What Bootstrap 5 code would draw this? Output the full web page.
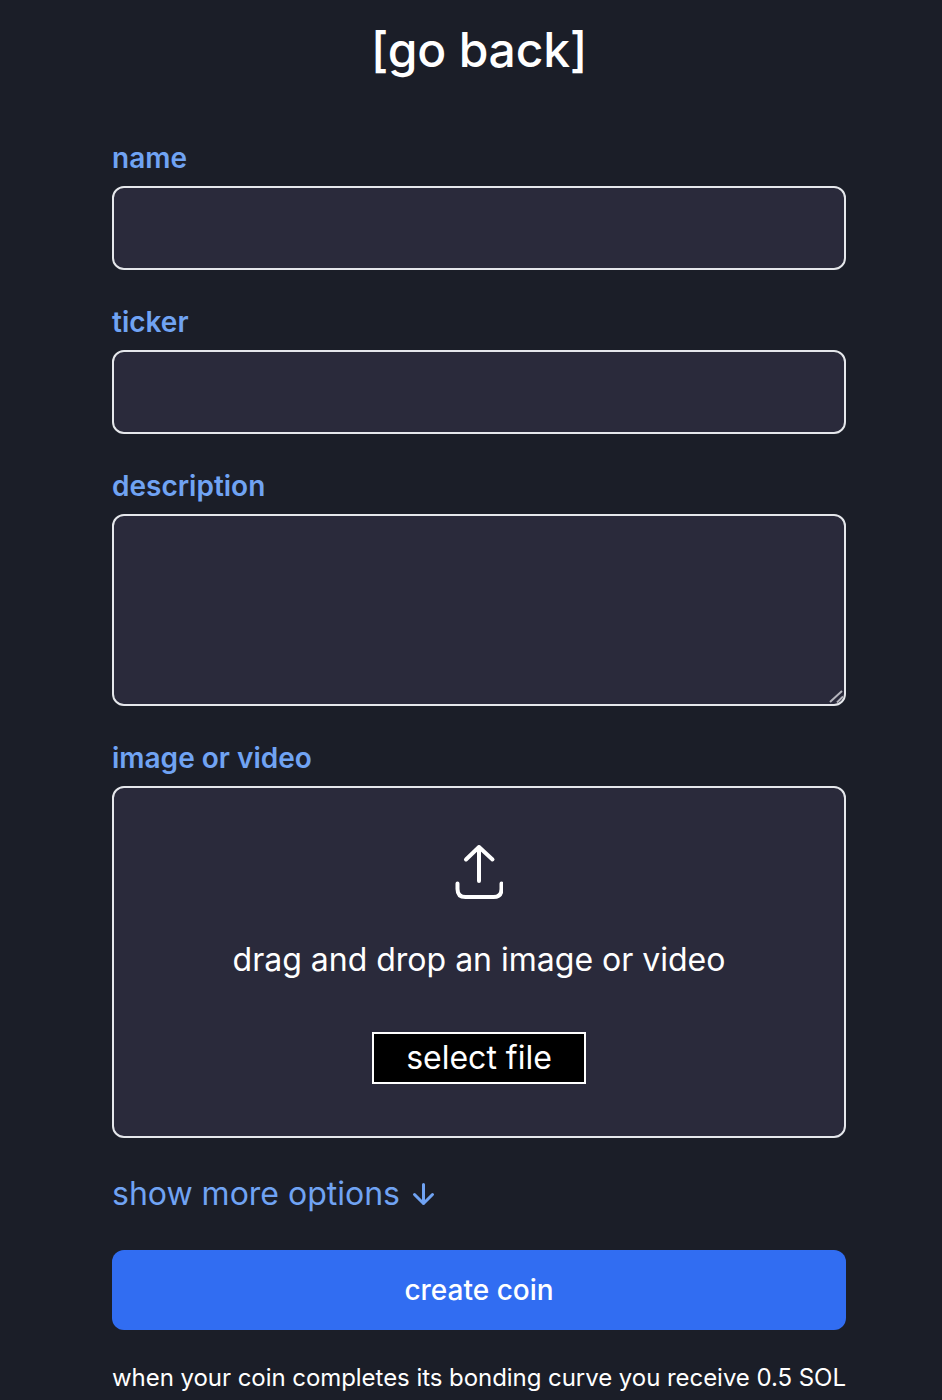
<!doctype html>
<html lang="en">
<head>
    <meta charset="UTF-8">
    <meta name="viewport" content="width=device-width, initial-scale=1.0">
    <title>create coin</title>
    <link href="https://cdn.jsdelivr.net/npm/bootstrap@5.3.3/dist/css/bootstrap.min.css" rel="stylesheet">
    <style>
        body {
            background-color: #1b1e28;
            font-family: Inter, "Liberation Sans", sans-serif;
            color: #fff;
            height: 1400px;
            overflow: hidden;
        }

        .coin-form {
            width: 734px;
            margin-left: 112px;
        }

        .back-link {
            display: block;
            font-size: 48px;
            line-height: 48px;
            font-weight: 500;
            letter-spacing: -0.2px;
            color: #fff;
            text-decoration: none;
            text-align: center;
            padding-top: 26px;
            margin-bottom: 64px;
        }

        .field-label {
            display: block;
            font-size: 28px;
            line-height: 40px;
            font-weight: 600;
            color: #70a3f3;
            margin-bottom: 8px;
        }

        .form-control.coin-input {
            background-color: #2a2a3b;
            border: 2px solid #e5e7eb;
            border-radius: 12px;
            color: #fff;
            height: 84px;
            margin-bottom: 32px;
        }

        .desc-wrap {
            margin-bottom: 32px;
        }

        textarea.form-control.coin-input {
            display: block;
            height: 192px;
            margin-bottom: 0;
        }

        textarea.coin-input::-webkit-resizer {
            display: none;
        }

        .resize-grip {
            position: absolute;
            right: 0;
            bottom: 0;
            pointer-events: none;
        }

        .drop-box {
            background-color: #2a2a3b;
            border: 2px solid #e5e7eb;
            border-radius: 12px;
            height: 352px;
            padding-top: 56px;
        }

        .drop-text {
            font-size: 32px;
            line-height: 40px;
            margin-top: 40px;
            margin-bottom: 52px;
        }

        .select-btn {
            background-color: #000;
            color: #fff;
            border: 2px solid #fff;
            border-radius: 0;
            font-size: 32px;
            line-height: 48px;
            width: 214px;
            height: 52px;
            padding: 0;
        }

        .more-link {
            font-size: 32px;
            line-height: 40px;
            color: #70a3f3;
            text-decoration: none;
            margin-top: 36px;
            margin-bottom: 36px;
        }

        .create-btn {
            background-color: #316df2;
            color: #fff;
            border: 0;
            border-radius: 12px;
            height: 80px;
            font-size: 28px;
            font-weight: 550;
        }

        .fee-note {
            font-size: 24px;
            line-height: 32px;
            letter-spacing: -0.05px;
            white-space: nowrap;
            margin-top: 32px;
        }
    </style>
</head>
<body>
    <form class="coin-form d-flex flex-column">
        <a href="#" class="back-link">[go back]</a>

        <label class="field-label" for="coinName">name</label>
        <input type="text" class="form-control coin-input" id="coinName">

        <label class="field-label" for="coinTicker">ticker</label>
        <input type="text" class="form-control coin-input" id="coinTicker">

        <label class="field-label" for="coinDesc">description</label>
        <div class="desc-wrap position-relative">
            <textarea class="form-control coin-input" id="coinDesc"></textarea>
            <svg class="resize-grip" width="20" height="20" viewBox="0 0 20 20" fill="none" stroke-width="2">
                <path d="M4 16 16 5M11 16.5 17 10.5" stroke="#b4b4bc"/>
            </svg>
        </div>

        <label class="field-label" for="coinFile">image or video</label>
        <div class="drop-box d-flex flex-column align-items-center">
            <svg width="48" height="56" viewBox="0 0 48 56" fill="none" stroke="#fff" stroke-width="4" stroke-linecap="round" stroke-linejoin="round">
                <path d="M24 3V37M11 15.5 24 3 37.5 15.5"/>
                <path d="M2.5 39.5V45Q2.5 53 10.5 53H38.5Q46.5 53 46.5 45V39.5"/>
            </svg>
            <div class="drop-text">drag and drop an image or video</div>
            <button type="button" class="btn select-btn" id="coinFile">select file</button>
        </div>

        <a href="#" class="more-link d-flex align-items-center gap-2">show more options
            <svg width="28" height="28" viewBox="0 0 28 28" fill="none" stroke="#70a3f3" stroke-width="3" stroke-linecap="round" stroke-linejoin="round">
                <path d="M15.5 4.5V23.5M6.5 14.5 15.5 23.5 24.5 14.5"/>
            </svg>
        </a>

        <button type="button" class="btn create-btn">create coin</button>
        <div class="fee-note">when your coin completes its bonding curve you receive 0.5 SOL</div>
    </form>
</body>
</html>
